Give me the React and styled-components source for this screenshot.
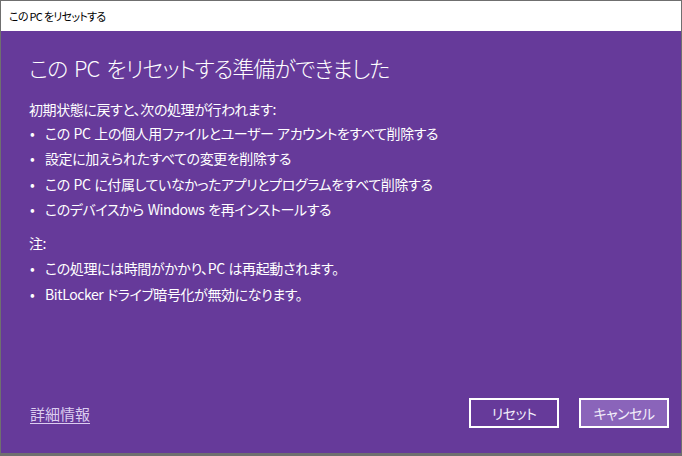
import styled, { createGlobalStyle } from "styled-components";

const Global = createGlobalStyle`
  html, body {
    margin: 0;
    padding: 0;
    background: #6b6b6b;
  }
  body {
    font-family: "Noto Sans CJK JP", "Noto Sans", sans-serif;
    font-feature-settings: "palt";
  }
`;

const Window = styled.div`
  width: 682px;
  height: 456px;
  box-sizing: border-box;
  border: 1px solid #6f6f6f;
  border-bottom-width: 3px;
  display: flex;
  flex-direction: column;
  background: #663a9a;
`;

const TitleBar = styled.div`
  height: 30px;
  flex: none;
  background: #fff;
  color: #000;
  font-size: 11px;
  letter-spacing: -0.7px;
  display: flex;
  align-items: center;
  padding-left: 8px;
`;

const Body = styled.div`
  flex: 1;
  display: flex;
  flex-direction: column;
  padding: 20px 12px 25px 28px;
  color: #fff;
`;

const Heading = styled.h1`
  margin: 0;
  font-size: 22px;
  font-weight: 300;
  line-height: 32px;
  letter-spacing: -1px;
  word-spacing: 3px;
`;

const Text = styled.p`
  margin: ${(p) => p.$top || 0}px 0 ${(p) => p.$bottom || 0}px;
  font-size: 14px;
  line-height: 25.5px;
  letter-spacing: -0.4px;
  word-spacing: 1px;
`;

const List = styled.ul`
  list-style: none;
  margin: 0;
  padding: 0;
`;

const Item = styled.li`
  font-size: 14px;
  line-height: 25.5px;
  letter-spacing: -0.4px;
  word-spacing: 1px;
  display: flex;

  &::before {
    content: "•";
    width: 15px;
    padding-left: 1px;
    flex: none;
  }
`;

const Footer = styled.div`
  margin-top: auto;
  display: flex;
  align-items: center;
  gap: 20px;
`;

const Link = styled.a`
  color: #dccdf0;
  font-size: 15px;
  text-decoration: underline;
  text-underline-offset: 3px;
  margin-right: auto;
  margin-left: 1px;
`;

const Button = styled.button`
  width: 90px;
  height: 30px;
  box-sizing: border-box;
  border: 2px solid #fff;
  background: ${(p) => (p.$primary ? "#8a64ba" : "transparent")};
  color: #f2eefa;
  font-family: inherit;
  font-feature-settings: "palt";
  font-size: 14px;
  letter-spacing: -0.5px;
  padding: 0;
`;

export default function App() {
  return (
    <>
      <Global />
      <Window>
        <TitleBar>この PC をリセットする</TitleBar>
        <Body>
          <Heading>この PC をリセットする準備ができました</Heading>
          <Text $top={14} $bottom={-2}>初期状態に戻すと、次の処理が行われます:</Text>
          <List>
            <Item>この PC 上の個人用ファイルとユーザー アカウントをすべて削除する</Item>
            <Item>設定に加えられたすべての変更を削除する</Item>
            <Item>この PC に付属していなかったアプリとプログラムをすべて削除する</Item>
            <Item>このデバイスから Windows を再インストールする</Item>
          </List>
          <Text $top={8}>注:</Text>
          <List>
            <Item>この処理には時間がかかり、PC は再起動されます。</Item>
            <Item>BitLocker ドライブ暗号化が無効になります。</Item>
          </List>
          <Footer>
            <Link href="#">詳細情報</Link>
            <Button>リセット</Button>
            <Button $primary>キャンセル</Button>
          </Footer>
        </Body>
      </Window>
    </>
  );
}
